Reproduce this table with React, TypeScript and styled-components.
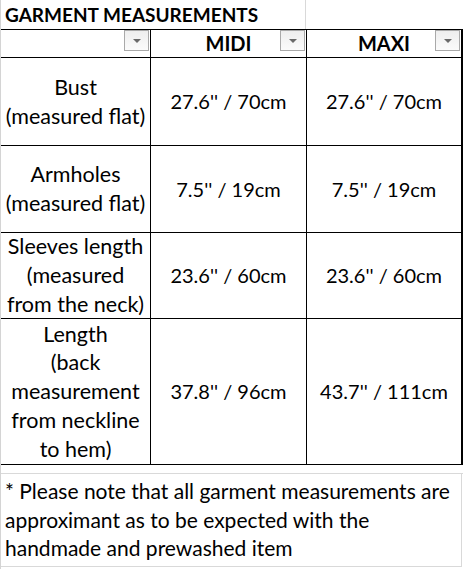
import React from 'react';
import styled, { createGlobalStyle } from 'styled-components';

const GlobalStyle = createGlobalStyle`
  html, body {
    margin: 0;
    padding: 0;
    background: #ffffff;
  }
  body {
    font-family: Lato, 'Open Sans', 'Liberation Sans', sans-serif;
    color: #000000;
  }
`;

const Sheet = styled.div`
  width: 463px;
  height: 569px;
  overflow: hidden;
  background: #ffffff;
  border-left: 1px solid #d4d4d4;
  box-sizing: border-box;
`;

const TitleRow = styled.div`
  display: grid;
  grid-template-columns: 305px 156px;
  height: 29px;
`;

const Title = styled.div`
  font-weight: 700;
  font-size: 19px;
  line-height: 29px;
  padding-left: 4px;
  white-space: nowrap;
  border-right: 1px solid #d9d9d9;
`;

const Grid = styled.div`
  display: grid;
  grid-template-columns: 149px 155px 154px;
  grid-template-rows: 27px 87px 86px 85px 145px;
  gap: 1px;
  background: #000000;
  border: 1px solid #000000;
  border-left: none;
  width: 461px;
`;

const Cell = styled.div<{ $label?: boolean }>`
  background: #ffffff;
  display: flex;
  flex-direction: column;
  align-items: center;
  justify-content: center;
  text-align: center;
  font-size: ${(p) => (p.$label ? '21.5px' : '20px')};
  line-height: 28.7px;
  position: relative;
  white-space: nowrap;
`;

const HeaderCell = styled(Cell)`
  font-weight: 700;
  line-height: 27px;
`;

const Filter = styled.div`
  position: absolute;
  right: 1px;
  top: 0;
  width: 25px;
  height: 21px;
  box-sizing: border-box;
  border: 1px solid #a9a9a9;
  background: linear-gradient(#eeeeee, #fbfbfb);
  display: flex;
  align-items: center;
  justify-content: center;

  &::after {
    content: '';
    width: 0;
    height: 0;
    border-left: 4px solid transparent;
    border-right: 4px solid transparent;
    border-top: 4px solid #6a6a6a;
  }
`;

const Line = styled.span`
  display: block;
`;

const Spacer = styled.div`
  height: 8px;
  border-bottom: 1px solid #d9d9d9;
`;

const Note = styled.div`
  width: 461px;
  height: 93px;
  box-sizing: border-box;
  padding: 3px 0 0 4px;
  font-size: 21px;
  line-height: 28.6px;
  border-right: 1px solid #d9d9d9;
  border-bottom: 1px solid #d9d9d9;
  white-space: nowrap;
`;

type Row = { label: string[]; midi: string; maxi: string };

const rows: Row[] = [
  { label: ['Bust', '(measured flat)'], midi: "27.6'' / 70cm", maxi: "27.6'' / 70cm" },
  { label: ['Armholes', '(measured flat)'], midi: "7.5'' / 19cm", maxi: "7.5'' / 19cm" },
  {
    label: ['Sleeves length', '(measured', 'from the neck)'],
    midi: "23.6'' / 60cm",
    maxi: "23.6'' / 60cm",
  },
  {
    label: ['Length', '(back', 'measurement', 'from neckline', 'to hem)'],
    midi: "37.8'' / 96cm",
    maxi: "43.7'' / 111cm",
  },
];

const note = [
  '* Please note that all garment measurements are',
  'approximant as to be expected with the',
  'handmade and prewashed item',
];

const App = () => {
  return (
    <>
      <GlobalStyle />
      <Sheet>
        <TitleRow>
          <Title>GARMENT MEASUREMENTS</Title>
          <div />
        </TitleRow>
        <Grid>
          <HeaderCell>
            <Filter />
          </HeaderCell>
          <HeaderCell>
            MIDI
            <Filter />
          </HeaderCell>
          <HeaderCell>
            MAXI
            <Filter />
          </HeaderCell>
          {rows.map((row) => (
            <React.Fragment key={row.label[0]}>
              <Cell $label>
                {row.label.map((l) => (
                  <Line key={l}>{l}</Line>
                ))}
              </Cell>
              <Cell>{row.midi}</Cell>
              <Cell>{row.maxi}</Cell>
            </React.Fragment>
          ))}
        </Grid>
        <Spacer />
        <Note>
          {note.map((l) => (
            <Line key={l}>{l}</Line>
          ))}
        </Note>
      </Sheet>
    </>
  );
};

export default App;
